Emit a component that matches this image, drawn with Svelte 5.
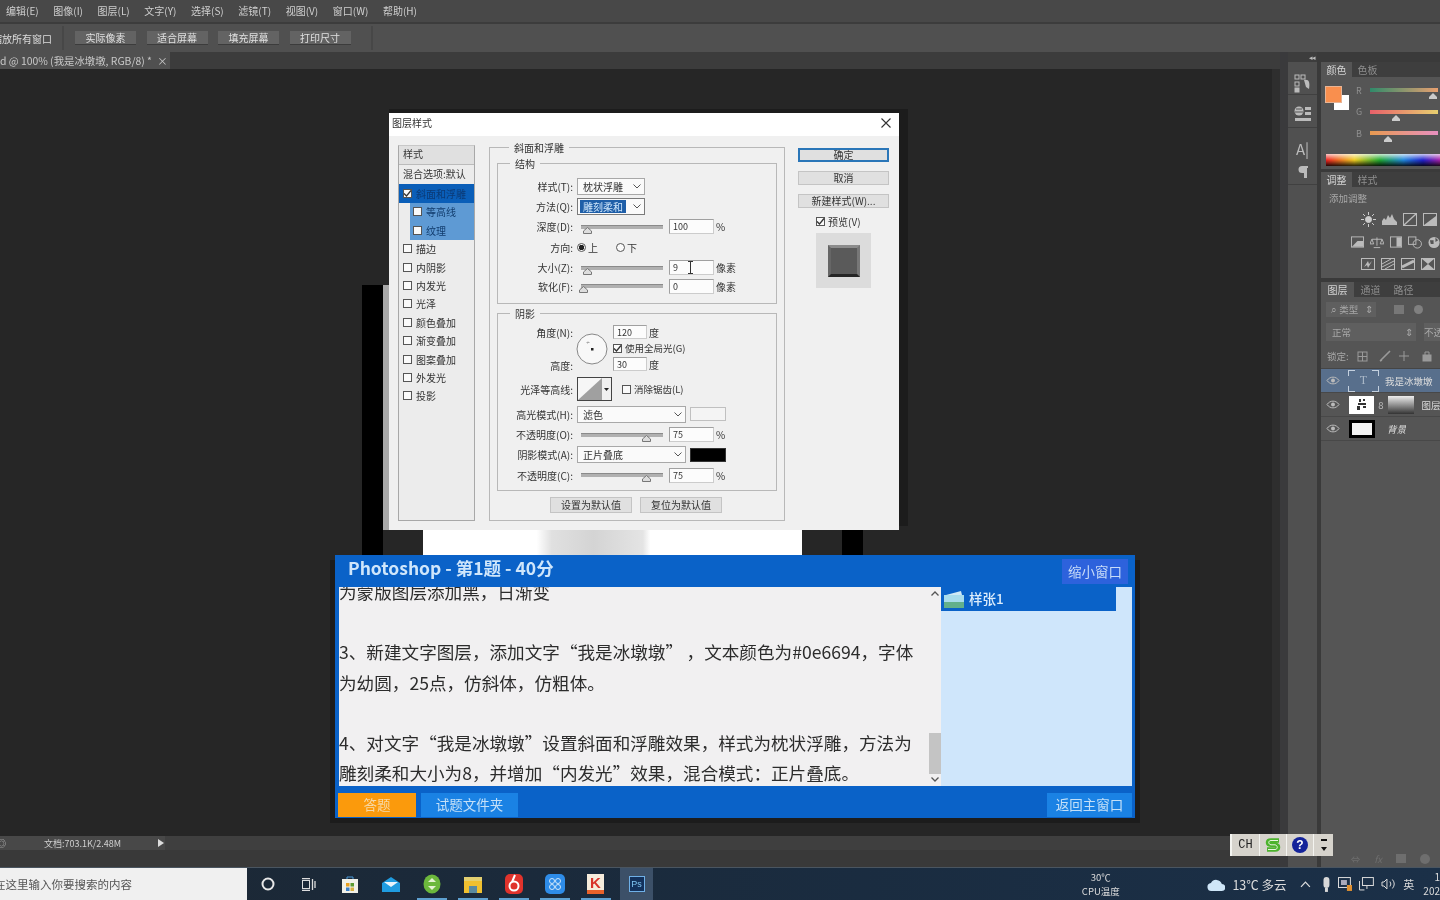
<script>
  const menus = ['编辑(E)', '图像(I)', '图层(L)', '文字(Y)', '选择(S)', '滤镜(T)', '视图(V)', '窗口(W)', '帮助(H)'];
  const optionButtons = ['实际像素', '适合屏幕', '填充屏幕', '打印尺寸'];
  const effects = ['描边', '内阴影', '内发光', '光泽', '颜色叠加', '渐变叠加', '图案叠加', '外发光', '投影'];
  const sliders = [
    { name: 'R', top: 'linear-gradient(90deg,#2f8a6a,#e9a070)', pos: 92 },
    { name: 'G', top: 'linear-gradient(90deg,#e8606a,#e8d070)', pos: 38 },
    { name: 'B', top: 'linear-gradient(90deg,#e89a50,#e890c0)', pos: 27 }
  ];
</script>

{#snippet check(on)}
  <span class="cb" class:on>
    {#if on}<svg width="9" height="9" viewBox="0 0 9 9"><path d="M1 4.500 3.500 7 8 1.500" fill="none" stroke="#333" stroke-width="1.300"/></svg>{/if}
  </span>
{/snippet}

{#snippet chevron()}
  <svg class="chev" width="8" height="5" viewBox="0 0 8 5"><path d="M.5.5 4 4 7.500.5" fill="none" stroke="#555"/></svg>
{/snippet}

{#snippet slider(pos)}
  <span class="track">
    <svg class="thumb" style="left: {pos}%" width="9" height="7" viewBox="0 0 9 7"><path d="M4.500.5 8.500 4v2.500H.5V4z" fill="#ddd" stroke="#777"/></svg>
  </span>
{/snippet}

{#snippet eye()}
  <svg class="eye" width="14" height="9" viewBox="0 0 14 9"><path d="M1 4.500C4 0 10 0 13 4.500 10 9 4 9 1 4.500z" fill="none" stroke="#bbb"/><circle cx="7" cy="4.500" r="2" fill="#bbb"/></svg>
{/snippet}

<div class="screen">
  <nav class="menubar">
    {#each menus as m}<span>{m}</span>{/each}
  </nav>

  <div class="options">
    <span class="opt-label">缩放所有窗口</span>
    <span class="opt-sep"></span>
    {#each optionButtons as b}<button class="opt-btn">{b}</button>{/each}
    <span class="opt-sep"></span>
  </div>

  <div class="workspace">
    <div class="left-col">
      <div class="tabstrip">
        <div class="doc-tab">d @ 100% (我是冰墩墩, RGB/8) * <i>×</i></div>
      </div>
      <div class="canvas">
        <div class="vscroll"></div>
      </div>
      <div class="status">
        <div class="status-info">
          <span class="status-zoom">◎</span>
          <span class="status-text">文档:703.1K/2.48M</span>
          <span class="status-arrow"></span>
        </div>
      </div>
      <div class="status-under"></div>
    </div>

    <aside class="dock">
      <div class="dock-edge"></div>
      <div class="dock-icons">
        <div class="collapse">◂◂</div>
        <div class="icon-group first">
          <svg width="18" height="20" viewBox="0 0 18 20" fill="none" stroke="#bbb"><rect x="1" y="1" width="4" height="4"/><rect x="7" y="1" width="4" height="4"/><rect x="1" y="8" width="4" height="4"/><rect x="1" y="14" width="4" height="4" fill="#bbb"/><path d="M10 6c5-1 6 2 5 9l-3-2z" fill="#bbb" stroke="none"/></svg>
        </div>
        <div class="icon-group">
          <svg width="18" height="16" viewBox="0 0 18 16"><circle cx="5" cy="5" r="4.500" fill="#bbb"/><path d="M2 3h6M1 6h8" stroke="#555"/><rect x="11" y="1" width="6" height="3" fill="#bbb"/><rect x="11" y="6" width="6" height="3" fill="#bbb"/><rect x="1" y="12" width="16" height="3" fill="#bbb"/></svg>
        </div>
        <div class="icon-group tall">
          <span class="a-glyph">A|</span>
          <svg width="12" height="14" viewBox="0 0 12 14"><path d="M11 1H5a3.500 3.500 0 0 0 0 7h2v5h3V3h1z" fill="#bbb"/></svg>
        </div>
      </div>
      <div class="dock-gap"></div>
      <div class="panels">
        <div class="panel-tabs">
          <span class="ptab active">颜色</span><span class="ptab">色板</span>
        </div>
        <section class="color-panel">
          <div class="swatches">
            <span class="sw-bg"></span>
            <span class="sw-fg"></span>
          </div>
          <div class="rgb">
            {#each sliders as s}
              <div class="rgb-row">
                <span class="rgb-name">{s.name}</span>
                <span class="rgb-bar" style="background: {s.top}">
                  <svg class="rgb-thumb" style="left: {s.pos}%" width="8" height="6" viewBox="0 0 8 6"><path d="M4 0 8 4v2H0V4z" fill="#ccc"/></svg>
                </span>
              </div>
            {/each}
          </div>
          <div class="spectrum"></div>
        </section>

        <div class="panel-tabs">
          <span class="ptab active">调整</span><span class="ptab">样式</span>
        </div>
        <section class="adjust-panel">
          <div class="adjust-title">添加调整</div>
          <div class="adj-row r1">
            <svg width="15" height="15" viewBox="0 0 15 15" fill="none" stroke="#ccc"><circle cx="7.500" cy="7.500" r="3" fill="#ccc"/><path d="M7.500 0v3M7.500 12v3M0 7.500h3M12 7.500h3M2 2l2 2M11 11l2 2M2 13l2-2M11 4l2-2"/></svg>
            <svg width="15" height="12" viewBox="0 0 15 12"><path d="M0 12V8l2-3 2 2 2-5 2 3 2-4 2 5 3 3v3z" fill="#bbb"/></svg>
            <svg width="14" height="13" viewBox="0 0 14 13" fill="none" stroke="#bbb"><rect x=".5" y=".5" width="13" height="12"/><path d="M1 12 13 1" stroke-width="1.400"/></svg>
            <svg width="14" height="13" viewBox="0 0 14 13"><rect x=".5" y=".5" width="13" height="12" fill="none" stroke="#bbb"/><path d="M1 12 13 3v9z" fill="#bbb"/></svg>
          </div>
          <div class="adj-row r2">
            <svg width="14" height="12" viewBox="0 0 14 12"><rect x=".5" y=".5" width="13" height="11" fill="none" stroke="#bbb"/><path d="M1 11 7 5h6v6z" fill="#bbb"/></svg>
            <svg width="15" height="13" viewBox="0 0 15 13" fill="none" stroke="#bbb"><path d="M7.500 1v9M2 3h11M2 3 0 8h4zM13 3l-2 5h4zM4 12h7"/></svg>
            <svg width="13" height="12" viewBox="0 0 13 12"><rect x=".5" y=".5" width="12" height="11" fill="none" stroke="#bbb"/><rect x="7" y="1" width="5" height="10" fill="#bbb"/></svg>
            <svg width="15" height="13" viewBox="0 0 15 13" fill="none" stroke="#bbb"><rect x=".5" y=".5" width="8" height="8"/><circle cx="10" cy="8" r="4.500"/></svg>
            <svg width="13" height="13" viewBox="0 0 13 13"><circle cx="6.500" cy="6.500" r="6" fill="#bbb"/><path d="M2 4h4v4H3zM8 1l3 3-3 2z" fill="#555"/></svg>
          </div>
          <div class="adj-row r3">
            <svg width="14" height="12" viewBox="0 0 14 12"><rect x=".5" y=".5" width="13" height="11" fill="none" stroke="#bbb"/><path d="M3 9 7 3l1 3 3-3-4 7-1-3z" fill="#bbb"/></svg>
            <svg width="14" height="12" viewBox="0 0 14 12"><rect x=".5" y=".5" width="13" height="11" fill="none" stroke="#bbb"/><path d="M1 9 13 3M1 6l9-5M4 11l9-5" stroke="#bbb"/></svg>
            <svg width="14" height="12" viewBox="0 0 14 12"><rect x=".5" y=".5" width="13" height="11" fill="none" stroke="#bbb"/><path d="M1 9 13 3" stroke="#bbb" stroke-width="3"/></svg>
            <svg width="14" height="12" viewBox="0 0 14 12"><rect x=".5" y=".5" width="13" height="11" fill="none" stroke="#bbb"/><path d="M1 1h12L7 6zM1 11h12L7 6z" fill="#bbb"/></svg>
          </div>
        </section>

        <div class="panel-tabs layers-tabs">
          <span class="ptab active">图层</span><span class="ptab">通道</span><span class="ptab">路径</span>
        </div>
        <section class="layers-panel">
          <div class="ly-filter">
            <span class="ly-kind">⌕ 类型 <b>⇕</b></span>
            <span class="ly-mini"></span><span class="ly-dot"></span>
          </div>
          <div class="ly-blend">
            <span class="ly-mode">正常 <b>⇕</b></span>
            <span class="ly-opac">不透</span>
          </div>
          <div class="ly-lock">
            <span>锁定:</span>
            <svg width="78" height="12" viewBox="0 0 78 12" fill="none" stroke="#9a9a9a"><rect x="1" y="2" width="9" height="9"/><path d="M1 6.500h9M5.500 2v9"/><path d="M23 11 33 1M23 11l2-1" stroke-width="1.600"/><path d="M47 1v10M42 6h10"/><rect x="66" y="5" width="8" height="6" fill="#9a9a9a"/><path d="M68 5V2h4v3"/></svg>
          </div>
          <div class="layer selected">
            {@render eye()}
            <span class="ly-t">T</span>
            <span class="ly-name">我是冰墩墩</span>
          </div>
          <div class="layer">
            {@render eye()}
            <span class="ly-thumb art">
              <svg width="16" height="13" viewBox="0 0 16 13" fill="#333"><path d="M5 1h2v3H5zM9 1h2v2H9zM4 5h8v2H4zM3 8h3v4H3zM9 8h3v2H9z"/></svg>
            </span>
            <span class="ly-link">8</span>
            <span class="ly-thumb grad"></span>
            <span class="ly-name plain">图层</span>
          </div>
          <div class="layer">
            {@render eye()}
            <span class="ly-thumb bgl"></span>
            <span class="ly-name bg-name">背景</span>
          </div>
          <div class="ly-spacer"></div>
          <div class="ly-foot">
            <span>⇔</span><i>fx</i><span class="foot-sq"></span><span class="foot-ci"></span>
          </div>
        </section>
      </div>
    </aside>
  </div>

  <footer class="taskbar">
    <div class="search"><span>在这里输入你要搜索的内容</span></div>
    <div class="task-icons">
      <span class="ti"><svg width="14" height="14" viewBox="0 0 14 14"><circle cx="7" cy="7" r="5.500" fill="none" stroke="#e8e8e8" stroke-width="2"/></svg></span>
      <span class="ti"><svg width="15" height="13" viewBox="0 0 15 13" fill="none" stroke="#ddd"><rect x="1.500" y="2.500" width="7" height="8"/><path d="M1 .5h8M1 12.500h8M11.500 1v11M14 3v7" stroke-width="1.300"/></svg></span>
      <span class="ti"><svg width="18" height="19" viewBox="0 0 18 19"><path d="M6 5V2h6v3" fill="none" stroke="#4a9ad8"/><rect x="1" y="4" width="16" height="14" fill="#f0f0e8"/><rect x="5" y="8" width="3.500" height="3.500" fill="#e8a020"/><rect x="9.500" y="8" width="3.500" height="3.500" fill="#5a9a30"/><rect x="5" y="12.500" width="3.500" height="3.500" fill="#3a80c8"/><rect x="9.500" y="12.500" width="3.500" height="3.500" fill="#d8b040"/></svg></span>
      <span class="ti"><svg width="18" height="15" viewBox="0 0 18 15"><path d="M0 6 9 0l9 6v9H0z" fill="#1f9ce0"/><path d="M2 5h14L9 10z" fill="#e8f4fb"/></svg></span>
      <span class="ti u"><svg width="18" height="20" viewBox="0 0 18 20"><ellipse cx="9" cy="10" rx="8.500" ry="9.500" fill="#6cb83c"/><path d="M5 8h8L9 4zM5 12h8l-4 4z" fill="#e6f3d4"/></svg></span>
      <span class="ti u"><svg width="18" height="17" viewBox="0 0 18 17"><rect y="1" width="18" height="16" fill="#f0c030"/><rect y="1" width="18" height="4" fill="#e4d070"/><rect x="5" y="10" width="8" height="7" fill="#5a8aa0"/></svg></span>
      <span class="ti u"><svg width="18" height="20" viewBox="0 0 18 20"><rect width="18" height="20" rx="5" fill="#e0332c"/><circle cx="9" cy="12" r="4.500" fill="none" stroke="#fff" stroke-width="2"/><path d="M10 1 7 8" stroke="#fff" stroke-width="2"/></svg></span>
      <span class="ti u"><svg width="20" height="20" viewBox="0 0 20 20"><rect width="20" height="20" rx="5" fill="#2e8ce8"/><circle cx="7" cy="7" r="2.500" fill="none" stroke="#cfe6fb"/><circle cx="13" cy="7" r="2.500" fill="none" stroke="#cfe6fb"/><circle cx="7" cy="13" r="2.500" fill="none" stroke="#cfe6fb"/><circle cx="13" cy="13" r="2.500" fill="none" stroke="#cfe6fb"/></svg></span>
      <span class="ti u"><span class="k-tile">K</span></span>
      <span class="ti active"><span class="ps">Ps</span></span>
    </div>
    <div class="tray">
      <div class="cpu"><span>30℃</span><span>CPU温度</span></div>
      <svg class="cloud" width="19" height="13" viewBox="0 0 19 13"><path d="M5 13a4 4 0 0 1-1-8 6 6 0 0 1 11 1 3.500 3.500 0 0 1 0 7z" fill="#cfe6f8"/></svg>
      <span class="weather">13℃ 多云</span>
      <svg class="caret" width="11" height="7" viewBox="0 0 11 7"><path d="M1 6 5.500 1 10 6" fill="none" stroke="#ddd" stroke-width="1.200"/></svg>
      <svg class="tray-i" width="9" height="15" viewBox="0 0 9 15"><rect x="1.500" width="6" height="11" rx="3" fill="#d8d8d8"/><rect x="3" y="11" width="3" height="4" fill="#d8d8d8"/></svg>
      <svg class="tray-i" width="15" height="14" viewBox="0 0 15 14"><rect x=".5" y=".5" width="12" height="10" fill="none" stroke="#ddd"/><rect x="3" y="3" width="6" height="5" fill="#aab"/><rect x="9" y="8" width="6" height="6" fill="#e09030"/></svg>
      <svg class="tray-i" width="15" height="14" viewBox="0 0 15 14" fill="none" stroke="#ddd"><rect x="3.500" y=".5" width="11" height="8"/><path d="M.5 4v9h5M8 9v3"/></svg>
      <svg class="tray-i" width="15" height="12" viewBox="0 0 15 12" fill="none" stroke="#ddd"><path d="M1 4v4h2l3 3V1L3 4zM9 3.500a4 4 0 0 1 0 5M11.500 1.500a7 7 0 0 1 0 9"/></svg>
      <span class="lang">英</span>
      <div class="clock"><span>1</span><span>202</span></div>
    </div>
  </footer>

  <!-- open document, lying on the canvas behind the dialog -->
  <div class="document">
    <span class="doc-edge"></span>
    <div class="doc-white"><span></span></div>
    <span class="doc-edge"></span>
  </div>

  <div class="dialog">
    <header class="dlg-title">
      <span>图层样式</span>
      <svg width="10" height="10" viewBox="0 0 10 10"><path d="M.5.5l9 9M9.500.5l-9 9" stroke="#333" stroke-width="1.100"/></svg>
    </header>
    <div class="dlg-body">
      <ul class="fx-list">
        <li class="fx-head">样式</li>
        <li class="fx-blend">混合选项:默认</li>
        <li class="fx-item sel">{@render check(true)}斜面和浮雕</li>
        <li class="fx-item sub">{@render check(false)}等高线</li>
        <li class="fx-item sub">{@render check(false)}纹理</li>
        {#each effects as e}
          <li class="fx-item">{@render check(false)}{e}</li>
        {/each}
      </ul>

      <fieldset class="fs-outer">
        <legend>斜面和浮雕</legend>
        <fieldset class="fs-inner fs-struct">
          <legend>结构</legend>
          <div class="row">
            <label>样式(T):</label>
            <span class="select w68">枕状浮雕{@render chevron()}</span>
          </div>
          <div class="row">
            <label>方法(Q):</label>
            <span class="select w68 focus"><em>雕刻柔和</em>{@render chevron()}</span>
          </div>
          <div class="row">
            <label>深度(D):</label>
            {@render slider(3)}
            <span class="input">100</span><span class="unit">%</span>
          </div>
          <div class="row">
            <label>方向:</label>
            <span class="radio on"></span><span class="radio-label">上</span>
            <span class="radio"></span><span class="radio-label">下</span>
          </div>
          <div class="row">
            <label>大小(Z):</label>
            {@render slider(3)}
            <span class="input">9<svg class="ibeam" width="7" height="13" viewBox="0 0 7 13"><path d="M1 .5h5M1 12.500h5M3.500 1v11" stroke="#333" fill="none"/></svg></span><span class="unit">像素</span>
          </div>
          <div class="row tight">
            <label>软化(F):</label>
            {@render slider(-3)}
            <span class="input">0</span><span class="unit">像素</span>
          </div>
        </fieldset>

        <fieldset class="fs-inner fs-shadow">
          <legend>阴影</legend>
          <div class="angle">
            <div class="angle-labels">
              <label>角度(N):</label>
              <label>高度:</label>
            </div>
            <svg class="dial" width="32" height="32" viewBox="0 0 32 32"><circle cx="16" cy="16" r="15" fill="#f8f8f8" stroke="#888"/><path d="M12 8.500l-.5 2M10.500 9.500h3" stroke="#aaa"/><rect x="15" y="15" width="2.500" height="2.500" fill="#222"/></svg>
            <div class="angle-fields">
              <div class="af"><span class="input short">120</span><span class="unit">度</span></div>
              <div class="af">{@render check(true)}<span class="cb-label">使用全局光(G)</span></div>
              <div class="af"><span class="input short">30</span><span class="unit">度</span></div>
            </div>
          </div>
          <div class="row contour-row">
            <label>光泽等高线:</label>
            <span class="contour">
              <svg width="24" height="22" viewBox="0 0 24 22"><rect width="24" height="22" fill="#f6f6f6"/><path d="M0 22 24 0v22z" fill="#a0a0a0"/></svg>
              <i><svg width="5" height="3" viewBox="0 0 5 3"><path d="M0 0h5L2.500 3z" fill="#222"/></svg></i>
            </span>
            {@render check(false)}<span class="cb-label">消除锯齿(L)</span>
          </div>
          <div class="row">
            <label>高光模式(H):</label>
            <span class="select w109">滤色{@render chevron()}</span>
            <span class="swatch white"></span>
          </div>
          <div class="row">
            <label>不透明度(O):</label>
            {@render slider(74)}
            <span class="input">75</span><span class="unit">%</span>
          </div>
          <div class="row">
            <label>阴影模式(A):</label>
            <span class="select w109">正片叠底{@render chevron()}</span>
            <span class="swatch black"></span>
          </div>
          <div class="row">
            <label>不透明度(C):</label>
            {@render slider(74)}
            <span class="input">75</span><span class="unit">%</span>
          </div>
        </fieldset>

        <div class="defaults">
          <button class="dlg-btn">设置为默认值</button>
          <button class="dlg-btn">复位为默认值</button>
        </div>
      </fieldset>

      <div class="dlg-side">
        <button class="dlg-btn side primary">确定</button>
        <button class="dlg-btn side">取消</button>
        <button class="dlg-btn side">新建样式(W)...</button>
        <div class="preview-check">{@render check(true)}<span>预览(V)</span></div>
        <div class="preview"><span></span></div>
      </div>
    </div>
  </div>

  <div class="exam">
    <header class="exam-head">
      <h1>Photoshop - 第1题 - 40分</h1>
      <button class="shrink">缩小窗口</button>
    </header>
    <div class="exam-body">
      <div class="question">
        <p>
          为蒙版图层添加黑，日渐变<br><br>
          3、新建文字图层，添加文字“我是冰墩墩”&thinsp;，文本颜色为#0e6694，字体<br>
          为幼圆，25点，仿斜体，仿粗体。<br><br>
          4、对文字“我是冰墩墩”设置斜面和浮雕效果，样式为枕状浮雕，方法为<br>
          雕刻柔和大小为8，并增加“内发光”效果，混合模式：正片叠底。
        </p>
      </div>
      <div class="scrollbar">
        <svg width="8" height="5" viewBox="0 0 8 5"><path d="M.5 4.500 4 1l3.500 3.500" fill="none" stroke="#555" stroke-width="1.300"/></svg>
        <span class="scroll-thumb"></span>
        <svg width="8" height="5" viewBox="0 0 8 5"><path d="M.5.5 4 4 7.500.5" fill="none" stroke="#555" stroke-width="1.300"/></svg>
      </div>
      <div class="samples">
        <div class="sample">
          <svg width="20" height="17" viewBox="0 0 20 17"><path d="M2 4 17 0l1 4z" fill="#cfe9f5"/><rect y="4" width="20" height="13" fill="#a8dcec"/><rect y="11" width="20" height="6" fill="#62b08c"/></svg>
          <span>样张1</span>
        </div>
      </div>
    </div>
    <footer class="exam-foot">
      <button class="answer">答题</button>
      <button class="folder">试题文件夹</button>
      <button class="back">返回主窗口</button>
    </footer>
  </div>

  <div class="ime">
    <span class="ime-cell ch">CH</span>
    <span class="ime-cell"><svg width="20" height="18" viewBox="0 0 20 18"><path d="M16 4.500H8C4 4.500 4 8.500 8 8.800h4c4 .4 4 4.700 0 4.700H4" fill="none" stroke="#4cb32c" stroke-width="4.500" stroke-linejoin="round"/><path d="M15 4.500H8C5 4.500 5 8.300 8 8.800h4c3 .4 3 4.700 0 4.700H5" fill="none" stroke="#e8f6e0" stroke-width="1"/></svg></span>
    <span class="ime-cell"><span class="help">?</span></span>
    <span class="ime-cell arrows"><b></b><i></i></span>
  </div>
</div>

<style>
  :global(body) {
    margin: 0;
    background: #262626;
  }
  .screen {
    position: relative;
    width: 1440px;
    height: 900px;
    overflow: hidden;
    display: flex;
    flex-direction: column;
    font-family: "Noto Sans CJK SC", "Noto Sans", sans-serif;
    font-size: 10px;
    color: #cfcfcf;
    background: #262626;
    filter: blur(.4px);
  }
  button {
    font: inherit;
    border: 0;
    padding: 0;
    color: inherit;
  }

  /* top bars */
  .menubar {
    flex: none;
    display: flex;
    align-items: center;
    gap: 14.600px;
    padding: 0 0 2px 6px;
    height: 20px;
    background: #484848;
    border-bottom: 2px solid #3c3c3c;
  }
  .options {
    height: 28px;
    flex: none;
    display: flex;
    align-items: center;
    background: #505050;
    color: #ddd;
  }
  .opt-label {
    width: 52px;
    display: flex;
    justify-content: flex-end;
    white-space: nowrap;
    overflow: hidden;
  }
  .opt-sep {
    width: 2px;
    height: 24px;
    margin: 0 11px 0 10px;
    background: #474747;
  }
  .opt-btn {
    width: 61px;
    height: 14px;
    margin-right: 10.500px;
    background: #636363;
    border-bottom: 1px solid #3c3c3c;
    color: #e0e0e0;
    font-size: 10px;
    line-height: 14px;
  }

  .workspace {
    flex: 1;
    display: flex;
    min-height: 0;
  }
  .left-col {
    width: 1280px;
    display: flex;
    flex-direction: column;
  }
  .tabstrip {
    height: 17px;
    background: #3c3c3c;
  }
  .doc-tab {
    width: 170px;
    height: 17px;
    box-sizing: border-box;
    padding-top: 1px;
    background: #505050;
    line-height: 16px;
    font-size: 10.400px;
    color: #c8c8c8;
    white-space: nowrap;
    overflow: hidden;
  }
  .doc-tab i {
    font-style: normal;
    margin-left: 3px;
  }
  .canvas {
    flex: 1;
    display: flex;
    justify-content: flex-end;
    background: #262626;
  }
  .vscroll {
    width: 8px;
    background: #2e2e2e;
  }
  .status {
    height: 14px;
    background: #3f3f3f;
  }
  .status-info {
    width: 165px;
    height: 14px;
    display: flex;
    align-items: center;
    background: #484848;
    font-size: 9px;
    color: #cfcfcf;
  }
  .status-zoom {
    width: 47px;
    flex: none;
    margin-left: -3px;
  }
  .status-text {
    flex: 1;
  }
  .status-arrow {
    width: 0;
    height: 0;
    margin-right: 1px;
    border-left: 6px solid #ddd;
    border-top: 4px solid transparent;
    border-bottom: 4px solid transparent;
  }
  .status-under {
    height: 17px;
    background: #393939;
  }

  /* right dock */
  .dock {
    flex: 1;
    display: flex;
    background: #3a3a3c;
    min-width: 0;
  }
  .dock-edge {
    width: 8px;
    flex: none;
  }
  .dock-icons {
    width: 29px;
    flex: none;
    background: #505050;
  }
  .collapse {
    height: 10px;
    line-height: 10px;
    background: #3d3d3d;
    text-align: right;
    font-size: 7px;
    letter-spacing: -1px;
    padding-right: 2px;
    color: #bbb;
  }
  .icon-group {
    height: 33px;
    display: flex;
    flex-direction: column;
    align-items: center;
    justify-content: center;
    border-bottom: 1px solid #404040;
    box-sizing: border-box;
    padding-top: 6px;
  }
  .icon-group.first {
    padding-top: 12px;
  }
  .icon-group.tall {
    height: 57px;
    gap: 7px;
    padding-top: 7px;
  }
  .a-glyph {
    font-size: 15px;
    line-height: 18px;
    color: #bbb;
  }
  .dock-gap {
    width: 4px;
    flex: none;
    background: #3a3a3a;
  }
  .panels {
    flex: 1;
    display: flex;
    flex-direction: column;
    min-width: 0;
    padding-top: 10px;
    background: #3a3a3a;
  }
  .panel-tabs {
    height: 15px;
    flex: none;
    display: flex;
    background: #3e3e3e;
    font-size: 10px;
    line-height: 15px;
  }
  .ptab {
    width: 31px;
    text-align: center;
    color: #8e8e8e;
  }
  .ptab.active {
    background: #555;
    color: #d4d4d4;
  }
  .color-panel {
    height: 92px;
    flex: none;
    position: relative;
    background: #555;
    margin-bottom: 3px;
  }
  .swatches {
    position: absolute;
    left: 5px;
    top: 10px;
    width: 23px;
    height: 23px;
  }
  .sw-fg, .sw-bg {
    position: absolute;
    width: 15px;
    height: 15px;
  }
  .sw-fg {
    background: #f98f4e;
    outline: 1px solid #e8b494;
  }
  .sw-bg {
    left: 8px;
    top: 8px;
    background: #fff;
  }
  .rgb {
    position: absolute;
    left: 35px;
    right: 2px;
    top: 11px;
    display: flex;
    flex-direction: column;
    gap: 17.500px;
  }
  .rgb-row {
    height: 4px;
    display: flex;
    align-items: center;
  }
  .rgb-name {
    width: 14px;
    font-size: 9px;
    color: #8f8f8f;
  }
  .rgb-bar {
    flex: 1;
    height: 4px;
    position: relative;
  }
  .rgb-thumb {
    position: absolute;
    top: 5px;
    margin-left: -4px;
  }
  .spectrum {
    position: absolute;
    left: 5px;
    right: 0;
    top: 77px;
    height: 12px;
    background:
      linear-gradient(180deg, rgba(255,255,255,.75), rgba(255,255,255,0) 50%, rgba(0,0,0,0) 50%, rgba(0,0,0,.85)),
      linear-gradient(90deg, #e22, #ec2 25%, #2a3 47%, #28d 68%, #22c 85%, #a2a);
  }
  .adjust-panel {
    height: 91px;
    flex: none;
    background: #555;
    margin-bottom: 4px;
    padding-left: 8px;
    overflow: hidden;
  }
  .adjust-title {
    padding-top: 4px;
    font-size: 9.500px;
    color: #a8a8a8;
  }
  .adj-row {
    display: flex;
    align-items: center;
    gap: 6px;
    height: 14px;
    white-space: nowrap;
  }
  .r1 { margin: 7px 0 0 32px; }
  .r2 { margin: 9px 0 0 22px; }
  .r3 { margin: 8px 0 0 32px; }
  .layers-tabs .ptab {
    width: 33px;
  }
  .layers-panel {
    flex: 1;
    min-height: 0;
    display: flex;
    flex-direction: column;
    background: #555;
    color: #a8a8a8;
    font-size: 9.500px;
  }
  .ly-filter {
    height: 24px;
    flex: none;
    display: flex;
    align-items: center;
    gap: 10px;
    padding-left: 5px;
  }
  .ly-kind {
    width: 50px;
    height: 15px;
    line-height: 15px;
    padding-left: 5px;
    box-sizing: border-box;
    background: #5f5f5f;
    white-space: nowrap;
  }
  .ly-kind b, .ly-mode b {
    float: right;
    font-weight: 400;
    margin-right: 3px;
  }
  .ly-mini {
    width: 10px;
    height: 9px;
    margin-left: 8px;
    background: #777;
  }
  .ly-dot {
    width: 9px;
    height: 9px;
    border-radius: 50%;
    background: #808080;
  }
  .ly-blend {
    height: 22px;
    flex: none;
    display: flex;
    align-items: center;
    gap: 8px;
    padding-left: 5px;
  }
  .ly-mode {
    width: 90px;
    height: 18px;
    line-height: 18px;
    box-sizing: border-box;
    padding-left: 6px;
    background: #5f5f5f;
  }
  .ly-opac {
    flex: 1;
    height: 18px;
    line-height: 18px;
    background: #5f5f5f;
    overflow: hidden;
    white-space: nowrap;
  }
  .ly-lock {
    height: 26px;
    flex: none;
    display: flex;
    align-items: center;
    gap: 8px;
    padding-left: 6px;
    border-bottom: 1px solid #454545;
    box-sizing: border-box;
  }
  .layer {
    height: 24px;
    flex: none;
    display: flex;
    align-items: center;
    border-bottom: 1px solid #484848;
    box-sizing: border-box;
    color: #ddd;
    white-space: nowrap;
  }
  .layer.selected {
    background: #586f8c;
  }
  .eye {
    width: 24px;
    flex: none;
    padding: 0 5px;
    box-sizing: border-box;
  }
  .ly-t {
    width: 31px;
    height: 22px;
    flex: none;
    margin-left: 3px;
    box-sizing: border-box;
    text-align: center;
    line-height: 21px;
    font-family: "Liberation Serif", serif;
    font-size: 12px;
    color: #aab8c8;
    --c: linear-gradient(#c4d0de, #c4d0de);
    background:
      var(--c) 0 0 / 7px 1px no-repeat,
      var(--c) 100% 0 / 7px 1px no-repeat,
      var(--c) 0 100% / 7px 1px no-repeat,
      var(--c) 100% 100% / 7px 1px no-repeat,
      var(--c) 0 0 / 1px 6px no-repeat,
      var(--c) 100% 0 / 1px 6px no-repeat,
      var(--c) 0 100% / 1px 6px no-repeat,
      var(--c) 100% 100% / 1px 6px no-repeat;
  }
  .ly-name {
    margin-left: 6px;
    overflow: hidden;
  }
  .ly-thumb {
    height: 18px;
    flex: none;
    display: flex;
    align-items: center;
    justify-content: center;
    box-sizing: border-box;
  }
  .art {
    width: 25px;
    margin-left: 4px;
    background: #fff;
  }
  .ly-link {
    width: 14px;
    text-align: center;
    color: #bbb;
  }
  .grad {
    width: 26px;
    background: linear-gradient(180deg, #eee, #333);
  }
  .plain {
    margin-left: 8px;
  }
  .bgl {
    width: 26px;
    margin-left: 4px;
    background: #f4f4f4;
    border: 3px solid #000;
  }
  .bg-name {
    margin-left: 12px;
    font-style: italic;
  }
  .ly-spacer {
    flex: 1;
  }
  .ly-foot {
    height: 17px;
    flex: none;
    display: flex;
    align-items: center;
    justify-content: flex-end;
    gap: 14px;
    color: #6e6e6e;
    padding-right: 10px;
    overflow: hidden;
  }
  .foot-sq {
    width: 10px;
    height: 9px;
    background: #6e6e6e;
  }
  .foot-ci {
    width: 10px;
    height: 10px;
    border-radius: 50%;
    background: #6e6e6e;
  }

  /* taskbar */
  .taskbar {
    height: 33px;
    flex: none;
    display: flex;
    background: linear-gradient(90deg, #1c2733, #1a2c40 60%, #1b3048);
    border-top: 1px solid #4a5560;
    box-sizing: border-box;
  }
  .search {
    width: 247px;
    flex: none;
    display: flex;
    align-items: center;
    background: #f0f0f0;
    color: #555;
    overflow: hidden;
  }
  .search span {
    margin-left: -6px;
    white-space: nowrap;
    font-size: 11.500px;
  }
  .task-icons {
    display: flex;
  }
  .ti {
    width: 41px;
    display: flex;
    align-items: center;
    justify-content: center;
    box-sizing: border-box;
    position: relative;
  }
  .ti.u {
    background: linear-gradient(#5ea0d0, #5ea0d0) center bottom / 30px 2px no-repeat;
  }
  .ti.active {
    background: #3c5068;
    width: 33px;
    margin-left: 4px;
  }
  .ps {
    width: 16px;
    height: 16px;
    display: block;
    text-align: center;
    line-height: 15px;
    background: #13315c;
    border: 1px solid #6fb0e8;
    color: #7fc4f2;
    font-family: "Liberation Sans", sans-serif;
    font-size: 9px;
    box-sizing: border-box;
  }
  .k-tile {
    width: 17px;
    height: 20px;
    text-align: center;
    line-height: 17px;
    background: linear-gradient(#f6ecdc 78%, #e8622a 78%);
    color: #d8332a;
    font-family: "Liberation Sans", sans-serif;
    font-weight: 700;
    font-size: 15px;
  }
  .tray {
    flex: 1;
    display: flex;
    align-items: center;
    color: #dcdcdc;
    font-size: 11px;
    min-width: 0;
  }
  .cpu {
    margin-left: 427px;
    width: 42px;
    display: flex;
    flex-direction: column;
    align-items: center;
    line-height: 14px;
    font-size: 9.500px;
  }
  .cloud {
    margin-left: 85px;
  }
  .weather {
    margin-left: 7px;
    width: 63px;
    white-space: nowrap;
    font-size: 12.500px;
  }
  .caret {
    margin-left: 5px;
  }
  .tray-i {
    margin-left: 11px;
  }
  .tray-i + .tray-i {
    margin-left: 7px;
  }
  .lang {
    margin-left: 7px;
  }
  .clock {
    margin-left: 8px;
    width: 18px;
    display: flex;
    flex-direction: column;
    align-items: flex-end;
    line-height: 14px;
    font-size: 10px;
    white-space: nowrap;
  }

  /* document on canvas */
  .document {
    position: absolute;
    left: 362px;
    top: 285px;
    width: 501px;
    height: 270px;
    display: flex;
  }
  .doc-edge {
    width: 21px;
    background: #000;
  }
  .doc-white {
    flex: 1;
    padding: 0 40px;
    background: linear-gradient(180deg, #a8a8a8 0, #a8a8a8 245px, #262626 245px);
    display: flex;
  }
  .doc-white span {
    flex: 1;
    background: linear-gradient(90deg, #fff 30%, #e0e0e0 34%, #d4d4d4 45%, #e4e4e4 58%, #fff 60%);
  }

  /* dialog */
  .dialog {
    position: absolute;
    left: 389px;
    top: 113px;
    width: 510px;
    height: 417px;
    background: #f0f0f0;
    color: #333;
    box-shadow: 9px -4px 0 #1c1c1c, 0 -4px 0 #1c1c1c;
    display: flex;
    flex-direction: column;
    font-size: 10px;
  }
  .dlg-title {
    height: 23px;
    flex: none;
    display: flex;
    align-items: center;
    justify-content: space-between;
    box-sizing: border-box;
    padding: 0 8px 4px 3px;
    background: #fff;
  }
  .dlg-body {
    flex: 1;
    display: flex;
    align-items: flex-start;
    padding: 9px 0 0 9px;
  }
  .fx-list {
    width: 77px;
    height: 376px;
    flex: none;
    box-sizing: border-box;
    margin: 0;
    padding: 0;
    list-style: none;
    border: 1px solid #a8a8a8;
    border-top-color: #c8c8c8;
    background: #ececec;
  }
  .fx-head {
    height: 18px;
    line-height: 16px;
    padding-left: 4px;
    background: #e0e0e0;
    border-bottom: 1px solid #bbb;
  }
  .fx-blend {
    height: 19.400px;
    line-height: 17px;
    padding-left: 4px;
    white-space: nowrap;
  }
  .fx-item {
    height: 18.400px;
    display: flex;
    align-items: center;
    gap: 4px;
    padding-left: 4px;
    white-space: nowrap;
  }
  .fx-item.sel {
    background: #0a5eb8;
    color: #0b3a75;
  }
  .fx-item.sub {
    margin-left: 11px;
    padding-left: 3px;
    background: #5e9ad4;
    color: #123d6e;
  }
  .cb {
    width: 9px;
    height: 9px;
    flex: none;
    display: inline-flex;
    align-items: center;
    justify-content: center;
    box-sizing: border-box;
    border: 1px solid #555;
    background: #fafafa;
  }
  .cb svg {
    margin: -1px;
  }

  fieldset {
    margin: 0;
    min-width: 0;
    box-sizing: border-box;
    border: 1px solid #b8b8b8;
  }
  legend {
    padding: 0 5px;
    margin-left: 12px;
    font-size: 10px;
    line-height: 13px;
  }
  .fs-outer {
    width: 296px;
    height: 380px;
    flex: none;
    margin: -4px 0 0 14px;
    padding: 0 7px;
  }
  .fs-inner {
    padding: 0;
  }
  .fs-struct {
    height: 147px;
    padding-top: 6px;
    margin-top: 3px;
  }
  .fs-shadow {
    height: 184px;
    margin-top: 3px;
  }
  .row {
    height: 20.400px;
    display: flex;
    align-items: center;
    white-space: nowrap;
  }
  .row.tight {
    margin-top: -2px;
  }
  label {
    width: 75px;
    flex: none;
    text-align: right;
    margin-right: 4px;
    white-space: nowrap;
  }
  .select {
    height: 17px;
    box-sizing: border-box;
    display: flex;
    align-items: center;
    justify-content: space-between;
    padding: 0 3px 0 5px;
    background: #fafafa;
    border: 1px solid #a8a8a8;
  }
  .select.focus {
    padding-left: 2px;
    border-color: #7a7a7a;
  }
  .select em {
    font-style: normal;
    background: #1e5ea8;
    color: #cfe6fb;
    padding: 0 3px;
    line-height: 13px;
  }
  .w68 { width: 68px; }
  .w109 { width: 109px; }
  .track {
    position: relative;
    width: 82px;
    height: 3px;
    flex: none;
    margin: 0 6px 0 4px;
    background: #b0b0b0;
    border-top: 1px solid #8a8a8a;
  }
  .thumb {
    position: absolute;
    top: 1px;
  }
  .input {
    width: 45px;
    height: 15px;
    flex: none;
    box-sizing: border-box;
    display: flex;
    align-items: center;
    position: relative;
    padding-left: 3px;
    font-size: 9px;
    background: #fcfcfc;
    border: 1px solid #a0a0a0;
    border-bottom-color: #ccc;
    border-right-color: #ccc;
  }
  .input.short {
    width: 34px;
    height: 14px;
  }
  .ibeam {
    position: absolute;
    left: 17px;
    top: 0;
  }
  .unit {
    margin-left: 2px;
  }
  .radio {
    width: 9px;
    height: 9px;
    box-sizing: border-box;
    border: 1px solid #555;
    border-radius: 50%;
    background: #fafafa;
  }
  .radio.on {
    background: radial-gradient(circle, #222 0 2.500px, #fafafa 3px);
  }
  .radio-label {
    margin: 0 18px 0 2px;
  }
  .angle {
    position: relative;
    display: flex;
    padding-top: 3px;
    height: 53px;
  }
  .angle-labels {
    width: 78px;
    flex: none;
    display: flex;
    flex-direction: column;
    gap: 19px;
    padding-top: 3px;
  }
  .angle-labels label {
    display: block;
    line-height: 14px;
  }
  .dial {
    margin-top: 10px;
    flex: none;
  }
  .angle-fields {
    margin-left: 5px;
    display: flex;
    flex-direction: column;
    gap: 2px;
    padding-top: 2px;
  }
  .af {
    display: flex;
    align-items: center;
    height: 14px;
  }
  .cb-label {
    margin-left: 3px;
    font-size: 9.500px;
    white-space: nowrap;
  }
  .contour-row {
    height: 26px;
    margin-bottom: 2px;
  }
  .contour {
    width: 35px;
    height: 24px;
    box-sizing: border-box;
    display: flex;
    margin-right: 10px;
    border: 1px solid #444;
    background: #f0f0f0;
  }
  .contour svg:first-child {
    flex: none;
  }
  .contour i {
    flex: 1;
    display: flex;
    align-items: center;
    justify-content: center;
  }
  .swatch {
    width: 36px;
    height: 14px;
    margin-left: 4px;
    box-sizing: border-box;
    border: 1px solid #c0c0c0;
  }
  .swatch.white { background: #f4f4f4; }
  .swatch.black { background: #000; border-color: #333; }
  .defaults {
    display: flex;
    justify-content: center;
    gap: 8px;
    margin-top: 6px;
    padding-right: 2px;
  }
  .dlg-btn {
    width: 82px;
    height: 16px;
    line-height: 14px;
    background: #e0e0e0;
    border: 1px solid #c4c4c4;
    color: #333;
    font-size: 10px;
    white-space: nowrap;
  }
  .dlg-side {
    width: 91px;
    flex: none;
    margin: 3px 0 0 13px;
    display: flex;
    flex-direction: column;
    align-items: flex-start;
  }
  .side {
    width: 91px;
    height: 14px;
    line-height: 12px;
    margin-bottom: 9px;
  }
  .primary {
    border: 2px solid #2a76b8;
    line-height: 10px;
  }
  .preview-check {
    display: flex;
    align-items: center;
    gap: 3px;
    margin: -4px 0 0 18px;
    height: 16px;
  }
  .preview {
    width: 55px;
    height: 55px;
    margin: 4px 0 0 18px;
    display: flex;
    align-items: center;
    justify-content: center;
    background: #dcdcdc;
  }
  .preview span {
    width: 32px;
    height: 32px;
    box-sizing: border-box;
    background: #5a5a5a;
    border: 3px solid;
    border-color: #8c8c8c #777 #252525 #666;
  }

  /* exam window */
  .exam {
    position: absolute;
    left: 335px;
    top: 555px;
    width: 800px;
    height: 263px;
    display: flex;
    flex-direction: column;
    background: #0a62c8;
    box-shadow: 5px 5px 0 #1c1c1c, -5px 5px 0 #1c1c1c;
  }
  .exam-head {
    height: 32px;
    flex: none;
    display: flex;
    align-items: center;
    justify-content: space-between;
    padding: 0 7px 0 13px;
  }
  h1 {
    margin: 0 0 6px;
    font-size: 17.500px;
    font-weight: 700;
    line-height: 24px;
    color: #cfe6fb;
  }
  .shrink {
    width: 66px;
    height: 25px;
    background: #2d62dc;
    color: #c8dcf8;
    font-size: 13.500px;
    line-height: 22px;
  }
  .exam-body {
    flex: 1;
    min-height: 0;
    display: flex;
    padding: 0 3px 0 4px;
  }
  .question {
    flex: 1;
    min-width: 0;
    overflow: hidden;
    background: #f1f0f1;
    color: #2c2c2c;
  }
  .question p {
    margin: -10px 0 0;
    font-size: 17.600px;
    line-height: 30.200px;
    white-space: nowrap;
  }
  .scrollbar {
    width: 12px;
    flex: none;
    display: flex;
    flex-direction: column;
    align-items: center;
    justify-content: space-between;
    padding: 4px 0;
    box-sizing: border-box;
    background: #f1f0f1;
    position: relative;
  }
  .scroll-thumb {
    width: 12px;
    height: 41px;
    margin-top: auto;
    margin-bottom: 3px;
    background: #c4c4c4;
  }
  .samples {
    width: 191px;
    flex: none;
    background: #cfe6fb;
  }
  .sample {
    width: 175px;
    height: 24px;
    display: flex;
    align-items: center;
    gap: 5px;
    padding-left: 3px;
    box-sizing: border-box;
    background: #0a62c8;
    color: #dcecfb;
    font-size: 13.500px;
    font-weight: 500;
    line-height: 22px;
  }
  .sample span {
    padding-bottom: 2px;
  }
  .exam-foot {
    height: 31px;
    flex: none;
    display: flex;
    align-items: flex-end;
    padding: 0 3px 1px;
    gap: 5px;
  }
  .exam-foot button {
    height: 24px;
    font-size: 13.500px;
    line-height: 21px;
    padding-bottom: 2px;
  }
  .answer {
    width: 78px;
    background: #fb9a0c;
    color: #f7d9a8;
  }
  .folder {
    width: 97px;
    background: #1a82e4;
    color: #c4e0f8;
  }
  .back {
    width: 85px;
    margin-left: auto;
    background: #1a82e4;
    color: #c4e0f8;
  }

  /* input method bar */
  .ime {
    position: absolute;
    left: 1230px;
    top: 834px;
    height: 22px;
    display: flex;
    background: #d6d3cc;
    border-left: 2px solid #f4f4f0;
    color: #222;
  }
  .ime-cell {
    width: 27px;
    display: flex;
    align-items: center;
    justify-content: center;
    border-right: 1px solid #f4f4f0;
    box-sizing: border-box;
  }
  .ch {
    width: 28px;
    font-family: "Liberation Mono", monospace;
    font-size: 12px;
  }
  .help {
    width: 16px;
    height: 16px;
    border-radius: 50%;
    background: #14239a;
    color: #fff;
    text-align: center;
    font: 700 12px/16px "Liberation Sans", sans-serif;
  }
  .arrows {
    width: 19px;
    flex-direction: column;
    gap: 6px;
    border-right: 0;
  }
  .arrows b {
    width: 6px;
    height: 2px;
    background: #111;
  }
  .arrows i {
    width: 0;
    height: 0;
    border-top: 4px solid #111;
    border-left: 3px solid transparent;
    border-right: 3px solid transparent;
  }
</style>
